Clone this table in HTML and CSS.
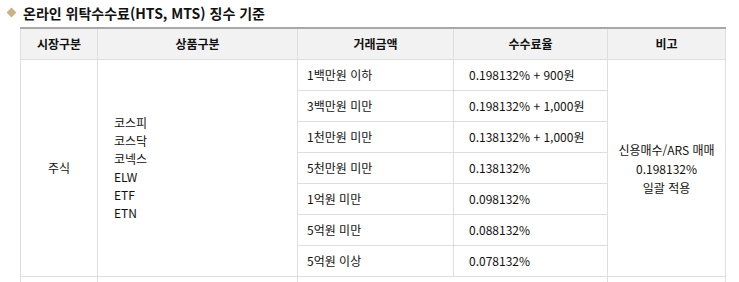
FILE: index.html
```html
<!DOCTYPE html>
<html lang="ko">
<head>
<meta charset="utf-8">
<link rel="stylesheet" href="styles.css">
</head>
<body>
<h3 class="title"><span class="diamond"></span>온라인 위탁수수료(HTS, MTS) 징수 기준</h3>
<table class="fee">
  <colgroup>
    <col class="c1"><col class="c2"><col class="c3"><col class="c4"><col class="c5">
  </colgroup>
  <thead>
    <tr><th>시장구분</th><th>상품구분</th><th>거래금액</th><th>수수료율</th><th>비고</th></tr>
  </thead>
  <tbody>
    <tr>
      <td rowspan="7" class="center">주식</td>
      <td rowspan="7" class="prod">코스피<br>코스닥<br>코넥스<br>ELW<br>ETF<br>ETN</td>
      <td class="amt">1백만원 이하</td>
      <td class="rate">0.198132% + 900원</td>
      <td rowspan="7" class="center note">신용매수/ARS 매매<br>0.198132%<br>일괄 적용</td>
    </tr>
    <tr><td class="amt">3백만원 미만</td><td class="rate">0.198132% + 1,000원</td></tr>
    <tr><td class="amt">1천만원 미만</td><td class="rate">0.138132% + 1,000원</td></tr>
    <tr><td class="amt">5천만원 미만</td><td class="rate">0.138132%</td></tr>
    <tr><td class="amt">1억원 미만</td><td class="rate">0.098132%</td></tr>
    <tr><td class="amt">5억원 미만</td><td class="rate">0.088132%</td></tr>
    <tr><td class="amt">5억원 이상</td><td class="rate">0.078132%</td></tr>
    <tr>
      <td class="center">&nbsp;</td>
      <td class="prod">&nbsp;</td>
      <td colspan="2" class="center">&nbsp;</td>
      <td class="center">&nbsp;</td>
    </tr>
  </tbody>
</table>
</body>
</html>
```
FILE: styles.css
```css
html, body {
  margin: 0;
  padding: 0;
  background: #fff;
  color: #111;
  font-family: "Noto Sans CJK KR", "Liberation Sans", sans-serif;
  font-size: 12px;
}

.title {
  margin: 0;
  height: 27px;
  display: flex;
  align-items: center;
  gap: 8px;
  padding: 0 0 2px 7px;
  box-sizing: border-box;
  font-size: 14px;
  font-weight: bold;
  color: #111;
  line-height: 1;
}

.diamond {
  width: 7px;
  height: 7px;
  background: #c8b389;
  transform: rotate(45deg);
  margin-left: 1px;
}

.fee {
  margin-left: 20px;
  width: 705px;
  border-collapse: collapse;
  table-layout: fixed;
}

.c1 { width: 77px; }
.c2 { width: 200px; }
.c3 { width: 156px; }
.c4 { width: 154px; }
.c5 { width: 118px; }

.fee th,
.fee td {
  border: 1px solid #dedede;
  padding: 0;
  line-height: 18px;
}

.fee th {
  height: 30px;
  background: #f2f2f2;
  font-weight: bold;
  text-align: center;
  border-top: 2px solid #a8a8a8;
}

.fee td {
  height: 30px;
  vertical-align: middle;
}

.center { text-align: center; }

.prod {
  padding-left: 16px !important;
  text-align: left;
}

.amt {
  padding-left: 9px !important;
}

.rate {
  padding-left: 15px !important;
}

.note {
  line-height: 19px !important;
}
```
